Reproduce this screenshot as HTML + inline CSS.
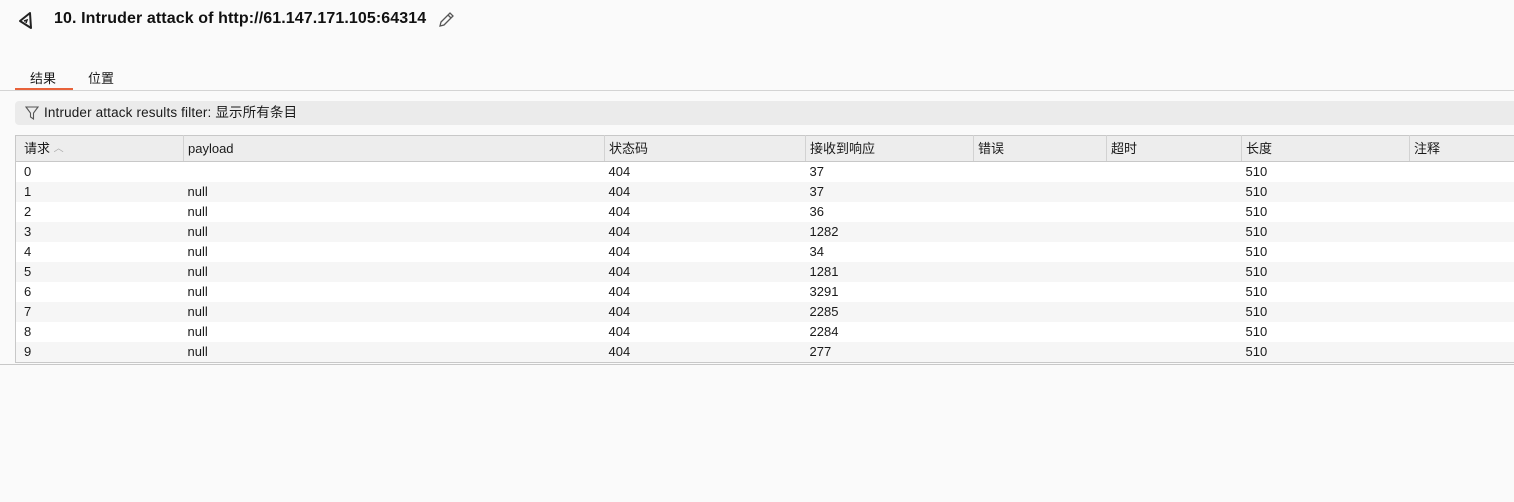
<!DOCTYPE html>
<html><head><meta charset="utf-8"><style>
*{margin:0;padding:0;box-sizing:border-box}
body{width:1514px;height:502px;background:#fafafa;font-family:"Liberation Sans","Noto Sans CJK SC",sans-serif;font-size:13px;color:#1a1a1a;position:relative;overflow:hidden}
.title{position:absolute;left:54px;top:10px;font-size:16px;letter-spacing:0.1px;font-weight:bold;color:#111}
.tab{position:absolute;top:68px;font-size:13px}
.line{position:absolute;left:0;top:90px;width:1514px;height:1px;background:#d4d4d4}
.ul{position:absolute;left:15px;top:88px;width:58px;height:2px;background:#e8623a}
.filter{position:absolute;left:15px;top:101px;width:1510px;height:24px;background:#ebebeb;border-radius:4px;padding:0 0 0 29px;line-height:24px;font-size:13.5px;letter-spacing:0.15px}
table{position:absolute;left:15px;top:135px;border-collapse:collapse;border:1px solid #c8c8c8;border-right:none;table-layout:fixed;width:1500px}
th{background:#ededed;font-weight:normal;text-align:left;height:26px;line-height:25px;padding:0 0 0 4px;border-right:1px solid #d2d2d2;border-bottom:1px solid #c8c8c8;vertical-align:middle;overflow:hidden}
th span{line-height:0;vertical-align:middle}
td{height:20px;padding:0 0 0 4px;line-height:20px}
tr:nth-child(even) td{background:#fff}
tr:nth-child(odd) td{background:#f6f6f6}
.bot{position:absolute;left:0;top:364px;width:1514px;height:1px;background:#c8c8c8}
</style></head><body>
<svg style="position:absolute;left:16px;top:11px" width="20" height="20" viewBox="0 0 20 20"><path d="M14 2 L4 10 L15 17 Z" fill="none" stroke="#222" stroke-width="2" stroke-linejoin="round"/><path d="M8 10 L11 9 L10 12" fill="none" stroke="#222" stroke-width="1.5"/></svg>
<div class="title">10. Intruder attack of http://61.147.171.105:64314</div>
<svg style="position:absolute;left:437px;top:11px" width="18" height="18" viewBox="0 0 18 18"><path d="M3 15 L4 11 L13 2 L16 5 L7 14 Z M11 4 L14 7" fill="none" stroke="#555" stroke-width="1.3"/></svg>
<div class="tab" style="left:30px">结果</div>
<div class="tab" style="left:88px">位置</div>
<div class="line"></div><div class="ul"></div>
<div class="filter">Intruder attack results filter: 显示所有条目</div>
<svg style="position:absolute;left:25px;top:106px" width="14" height="14" viewBox="0 0 14 14"><path d="M1 1 H13 L8.5 7 V13 L5.5 11 V7 Z" fill="none" stroke="#555" stroke-width="1.1"/></svg>
<table>
<colgroup><col style="width:168px"><col style="width:421px"><col style="width:201px"><col style="width:168px"><col style="width:133px"><col style="width:135px"><col style="width:168px"><col style="width:106px"></colgroup>
<tr><th style="padding-left:8px">请求 <span style="color:#aaa;font-size:10px">︿</span></th><th>payload</th><th>状态码</th><th>接收到响应</th><th>错误</th><th>超时</th><th>长度</th><th>注释</th></tr>
<tr><td style="padding-left:8px">0</td><td></td><td>404</td><td>37</td><td></td><td></td><td>510</td><td></td></tr>
<tr><td style="padding-left:8px">1</td><td>null</td><td>404</td><td>37</td><td></td><td></td><td>510</td><td></td></tr>
<tr><td style="padding-left:8px">2</td><td>null</td><td>404</td><td>36</td><td></td><td></td><td>510</td><td></td></tr>
<tr><td style="padding-left:8px">3</td><td>null</td><td>404</td><td>1282</td><td></td><td></td><td>510</td><td></td></tr>
<tr><td style="padding-left:8px">4</td><td>null</td><td>404</td><td>34</td><td></td><td></td><td>510</td><td></td></tr>
<tr><td style="padding-left:8px">5</td><td>null</td><td>404</td><td>1281</td><td></td><td></td><td>510</td><td></td></tr>
<tr><td style="padding-left:8px">6</td><td>null</td><td>404</td><td>3291</td><td></td><td></td><td>510</td><td></td></tr>
<tr><td style="padding-left:8px">7</td><td>null</td><td>404</td><td>2285</td><td></td><td></td><td>510</td><td></td></tr>
<tr><td style="padding-left:8px">8</td><td>null</td><td>404</td><td>2284</td><td></td><td></td><td>510</td><td></td></tr>
<tr><td style="padding-left:8px">9</td><td>null</td><td>404</td><td>277</td><td></td><td></td><td>510</td><td></td></tr>
</table>
<div class="bot"></div>
</body></html>
